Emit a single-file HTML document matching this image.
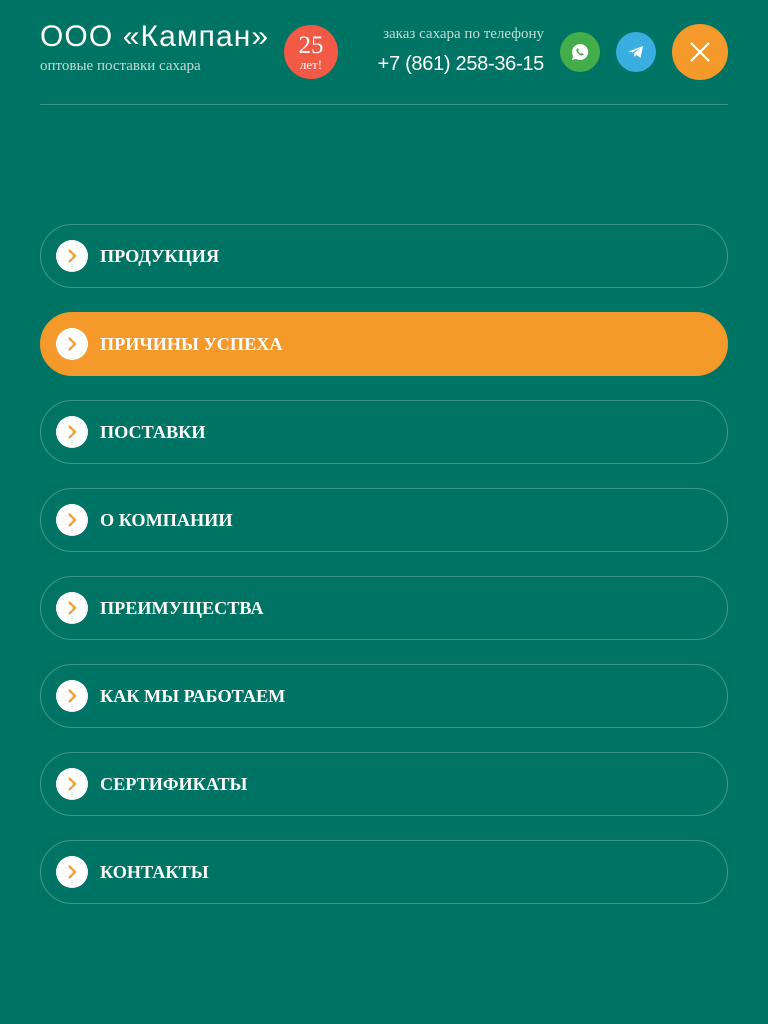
<!DOCTYPE html>
<html><head><meta charset="utf-8"><style>
*{margin:0;padding:0;box-sizing:border-box}
body{width:768px;height:1024px;background:#007464;position:relative;overflow:hidden;font-family:"Liberation Serif","DejaVu Serif",serif;color:#fff}
.t{position:absolute;white-space:nowrap}
.logo{left:40px;top:20px;font-family:"Liberation Sans","DejaVu Sans",sans-serif;font-size:30px;letter-spacing:1.1px}
.sub{left:40px;top:58px;font-size:15px;color:#bfdcd5}
.badge{position:absolute;left:284px;top:25px;width:54px;height:54px;border-radius:50%;background:#f25a45;border:2px dotted #f25a45;text-align:center;line-height:1}
.badge b{display:block;font-weight:normal;font-size:25px;margin-top:6px;font-family:"Liberation Serif",serif}
.badge i{display:block;font-style:normal;font-size:13px}
.ord{right:224px;top:26px;font-size:15px;color:#bfdcd5}
.ph{right:224px;top:53px;font-family:"Liberation Sans",sans-serif;font-size:20px;letter-spacing:-0.3px}
.c{position:absolute;border-radius:50%;display:flex;align-items:center;justify-content:center}
.line{position:absolute;left:40px;top:104px;width:688px;height:1px;background:#3e978a}
.it{position:absolute;left:40px;width:688px;height:64px;border:1px solid #3e978a;border-radius:32px;font-weight:bold;font-size:18.2px;line-height:63px;padding-left:59px}
.it.a{background:#f5992b;border-color:#f5992b}
.it .ic{position:absolute;left:15px;top:15px;width:32px;height:32px;border-radius:50%;background:#fff}
.it .ic svg{position:absolute;left:0;top:0}
</style></head><body>
<div class="t logo">ООО «Кампан»</div>
<div class="t sub">оптовые поставки сахара</div>
<div class="badge"><b>25</b><i>лет!</i></div>
<div class="t ord">заказ сахара по телефону</div>
<div class="t ph">+7 (861) 258-36-15</div>
<div class="c" style="left:560px;top:32px;width:40px;height:40px;background:#43ad49">
<svg width="20" height="20" viewBox="0 0 20 20"><path d="M10 2a8 8 0 0 0-6.9 12L2 18l4.1-1.1A8 8 0 1 0 10 2z" fill="#fff"/><path d="M7 6.5c.4-.4.9-.3 1.1.1l.7 1.5c.1.3 0 .5-.2.7l-.4.4c.5 1.1 1.4 2 2.5 2.5l.4-.4c.2-.2.5-.3.7-.2l1.5.7c.4.2.5.7.1 1.1-.6.7-1.5.9-2.4.5A7.5 7.5 0 0 1 6.5 8.9C6.2 8 6.4 7.1 7 6.5z" fill="#43ad49"/></svg></div>
<div class="c" style="left:616px;top:32px;width:40px;height:40px;background:#3aaee0">
<svg width="20" height="20" viewBox="0 0 20 20"><path d="M2.5 9.5 17 4l-2.5 12-4-3-2 2-.5-3.5 6-5.5-7.5 4.5z" fill="#fff"/></svg></div>
<div class="c" style="left:672px;top:24px;width:56px;height:56px;background:#f5992b">
<svg width="22" height="22" viewBox="0 0 22 22"><path d="M2 2 20 20M20 2 2 20" stroke="#fff" stroke-width="2.2"/></svg></div>
<div class="line"></div>
<div class="it" style="top:224px"><span class="ic"><svg width="32" height="32"><path d="M13 10l6 6-6 6" fill="none" stroke="#f5992b" stroke-width="2.2"/></svg></span>ПРОДУКЦИЯ</div>
<div class="it a" style="top:312px"><span class="ic"><svg width="32" height="32"><path d="M13 10l6 6-6 6" fill="none" stroke="#f5992b" stroke-width="2.2"/></svg></span>ПРИЧИНЫ УСПЕХА</div>
<div class="it" style="top:400px"><span class="ic"><svg width="32" height="32"><path d="M13 10l6 6-6 6" fill="none" stroke="#f5992b" stroke-width="2.2"/></svg></span>ПОСТАВКИ</div>
<div class="it" style="top:488px"><span class="ic"><svg width="32" height="32"><path d="M13 10l6 6-6 6" fill="none" stroke="#f5992b" stroke-width="2.2"/></svg></span>О КОМПАНИИ</div>
<div class="it" style="top:576px"><span class="ic"><svg width="32" height="32"><path d="M13 10l6 6-6 6" fill="none" stroke="#f5992b" stroke-width="2.2"/></svg></span>ПРЕИМУЩЕСТВА</div>
<div class="it" style="top:664px"><span class="ic"><svg width="32" height="32"><path d="M13 10l6 6-6 6" fill="none" stroke="#f5992b" stroke-width="2.2"/></svg></span>КАК МЫ РАБОТАЕМ</div>
<div class="it" style="top:752px"><span class="ic"><svg width="32" height="32"><path d="M13 10l6 6-6 6" fill="none" stroke="#f5992b" stroke-width="2.2"/></svg></span>СЕРТИФИКАТЫ</div>
<div class="it" style="top:840px"><span class="ic"><svg width="32" height="32"><path d="M13 10l6 6-6 6" fill="none" stroke="#f5992b" stroke-width="2.2"/></svg></span>КОНТАКТЫ</div>
</body></html>
